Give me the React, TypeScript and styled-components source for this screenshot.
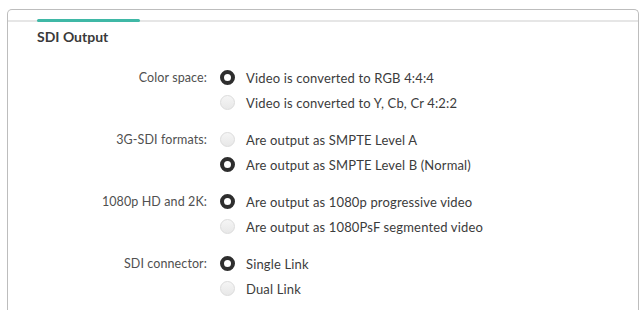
import React from "react";
import styled, { createGlobalStyle } from "styled-components";

const Global = createGlobalStyle`
  html, body { margin: 0; padding: 0; background: #ffffff; }
  body { font-family: Lato, "Open Sans", "Liberation Sans", sans-serif; }
`;

const Page = styled.div`
  width: 643px;
  height: 310px;
  overflow: hidden;
  padding: 9px 4px 0 7px;
  box-sizing: border-box;
`;

const Panel = styled.div`
  border: 1.5px solid #bdbdbd;
  border-bottom: none;
  border-radius: 5px 5px 0 0;
  height: 320px;
  box-sizing: border-box;
`;

const TabStrip = styled.div`
  height: 10px;
  border-bottom: 2px solid #e6e6e6;
  display: flex;
  align-items: flex-end;
  padding-left: 29px;
`;

const TabLine = styled.div`
  width: 103px;
  height: 3px;
  margin-bottom: -2px;
  background: #3fb8a6;
  border-radius: 2px;
`;

const Title = styled.h2`
  margin: 0;
  padding: 6px 0 0 29px;
  font-size: 14px;
  font-weight: 700;
  color: #3a3a3a;
  line-height: 18px;
`;

const Form = styled.div`
  display: flex;
  flex-direction: column;
  gap: 12px;
  padding-top: 19px;
`;

const Group = styled.div`
  display: grid;
  grid-template-columns: 199px 1fr;
  column-gap: 13px;
`;

const Label = styled.div`
  text-align: right;
  font-size: 12.5px;
  letter-spacing: 0.1px;
  color: #505050;
  line-height: 25px;
  height: 25px;
`;

const Options = styled.div`
  display: flex;
  flex-direction: column;
`;

const Option = styled.div`
  display: flex;
  align-items: center;
  height: 25px;
  gap: 11px;
  font-size: 13px;
  letter-spacing: 0.15px;
  color: #3c3c3c;
`;

const Radio = styled.span<{ $on?: boolean }>`
  width: 15px;
  height: 15px;
  border-radius: 50%;
  box-sizing: border-box;
  flex: none;
  ${(p) =>
    p.$on
      ? `border: 4px solid #2e2e2e; background: #ffffff;`
      : `border: 1px solid #dcdcdc; background: linear-gradient(#f5f5f5, #e8e8e8);`}
`;

const groups = [
  {
    label: "Color space:",
    options: [
      { text: "Video is converted to RGB 4:4:4", on: true },
      { text: "Video is converted to Y, Cb, Cr 4:2:2", on: false },
    ],
  },
  {
    label: "3G-SDI formats:",
    options: [
      { text: "Are output as SMPTE Level A", on: false },
      { text: "Are output as SMPTE Level B (Normal)", on: true },
    ],
  },
  {
    label: "1080p HD and 2K:",
    options: [
      { text: "Are output as 1080p progressive video", on: true },
      { text: "Are output as 1080PsF segmented video", on: false },
    ],
  },
  {
    label: "SDI connector:",
    options: [
      { text: "Single Link", on: true },
      { text: "Dual Link", on: false },
    ],
  },
];

export default function App() {
  return (
    <>
      <Global />
      <Page>
        <Panel>
          <TabStrip>
            <TabLine />
          </TabStrip>
          <Title>SDI Output</Title>
          <Form>
            {groups.map((g) => (
              <Group key={g.label}>
                <Label>{g.label}</Label>
                <Options>
                  {g.options.map((o) => (
                    <Option key={o.text}>
                      <Radio $on={o.on} />
                      {o.text}
                    </Option>
                  ))}
                </Options>
              </Group>
            ))}
          </Form>
        </Panel>
      </Page>
    </>
  );
}
